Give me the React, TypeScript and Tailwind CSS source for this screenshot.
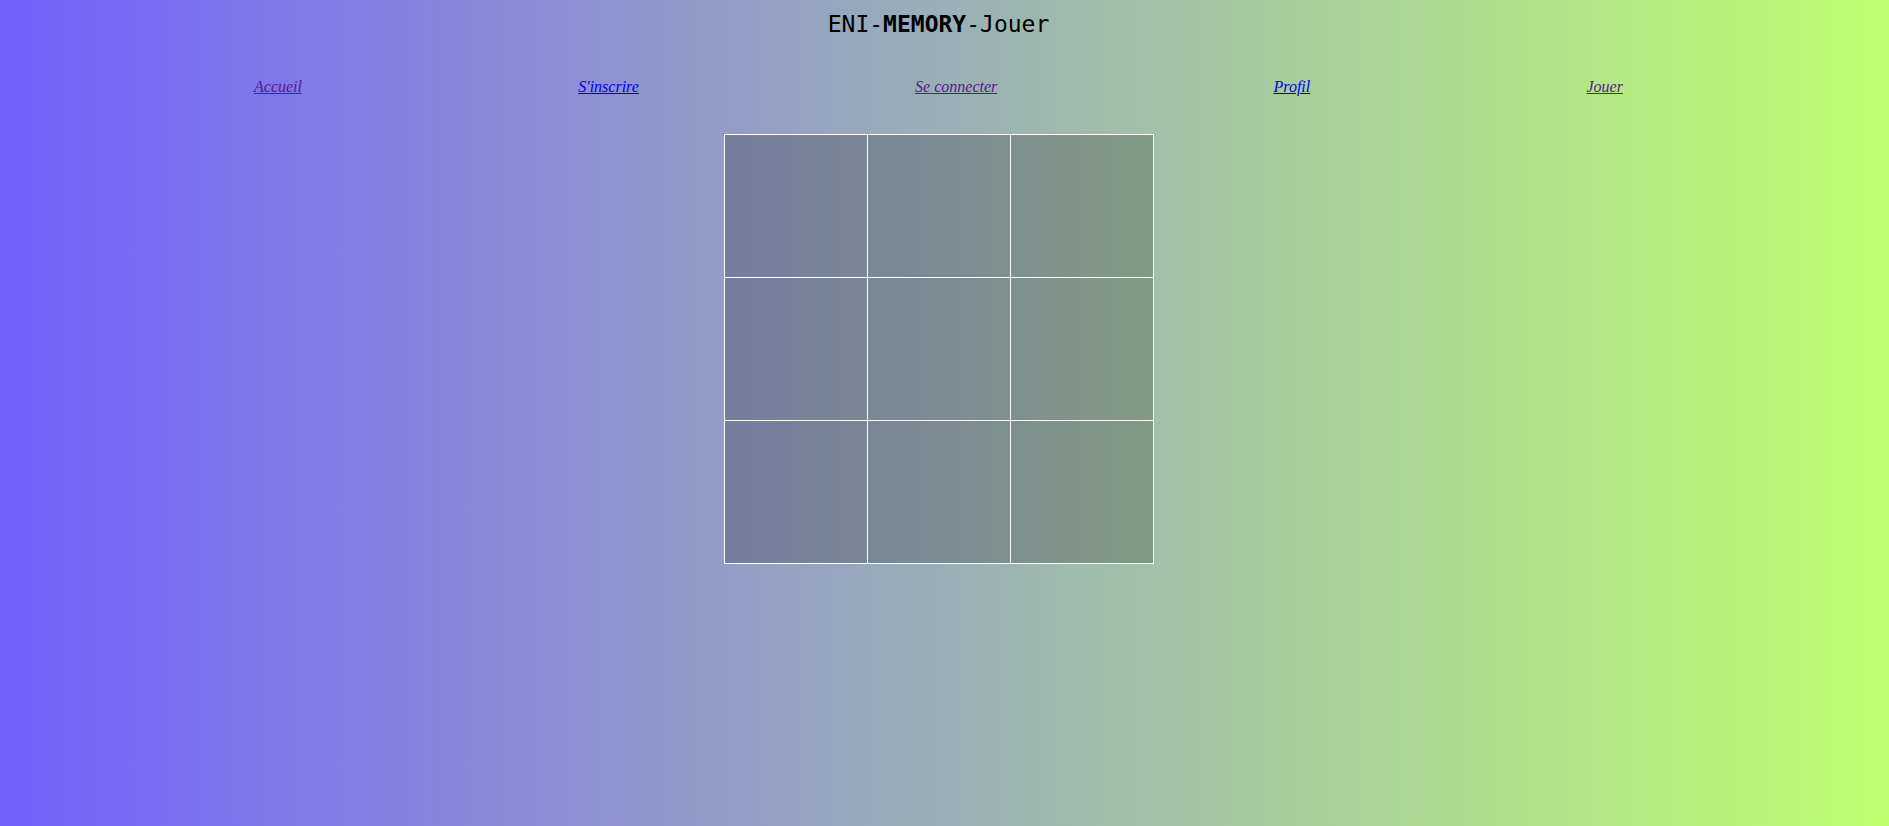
const links = [
  { label: 'Accueil', visited: true },
  { label: "S'inscrire", visited: false },
  { label: 'Se connecter', visited: true },
  { label: 'Profil', visited: false },
  { label: 'Jouer', visited: true },
];

export default function App() {
  const cells = Array.from({ length: 9 }, (_, i) => i);

  return (
    <div className="min-h-[826px] bg-linear-to-r/srgb from-[#7460ff] to-[#bfff6e]">
      <div className="w-[1877px]">
        {/* Titre */}
        <h1 className="pt-[10px] text-center text-[23px] leading-[28px] text-black font-['DejaVu_Sans_Mono',monospace]">
          ENI-<span className="font-bold">MEMORY</span>-Jouer
        </h1>

        {/* Navigation */}
        <nav className="mt-[40px] flex justify-between px-[254px] font-['Liberation_Serif',serif] text-base italic leading-[18px]">
          {links.map((link) => (
            <a
              key={link.label}
              href="#"
              className={link.visited ? 'underline text-[#551a8b]' : 'underline text-[#0000ee]'}
            >
              {link.label}
            </a>
          ))}
        </nav>

        {/* Plateau de jeu */}
        <div className="mt-[38px] flex justify-center">
          <div className="grid grid-cols-3 border-l border-t border-white">
            {cells.map((c) => (
              <div key={c} className="h-[143px] w-[143px] border-r border-b border-white bg-black/20" />
            ))}
          </div>
        </div>
      </div>
    </div>
  );
}
